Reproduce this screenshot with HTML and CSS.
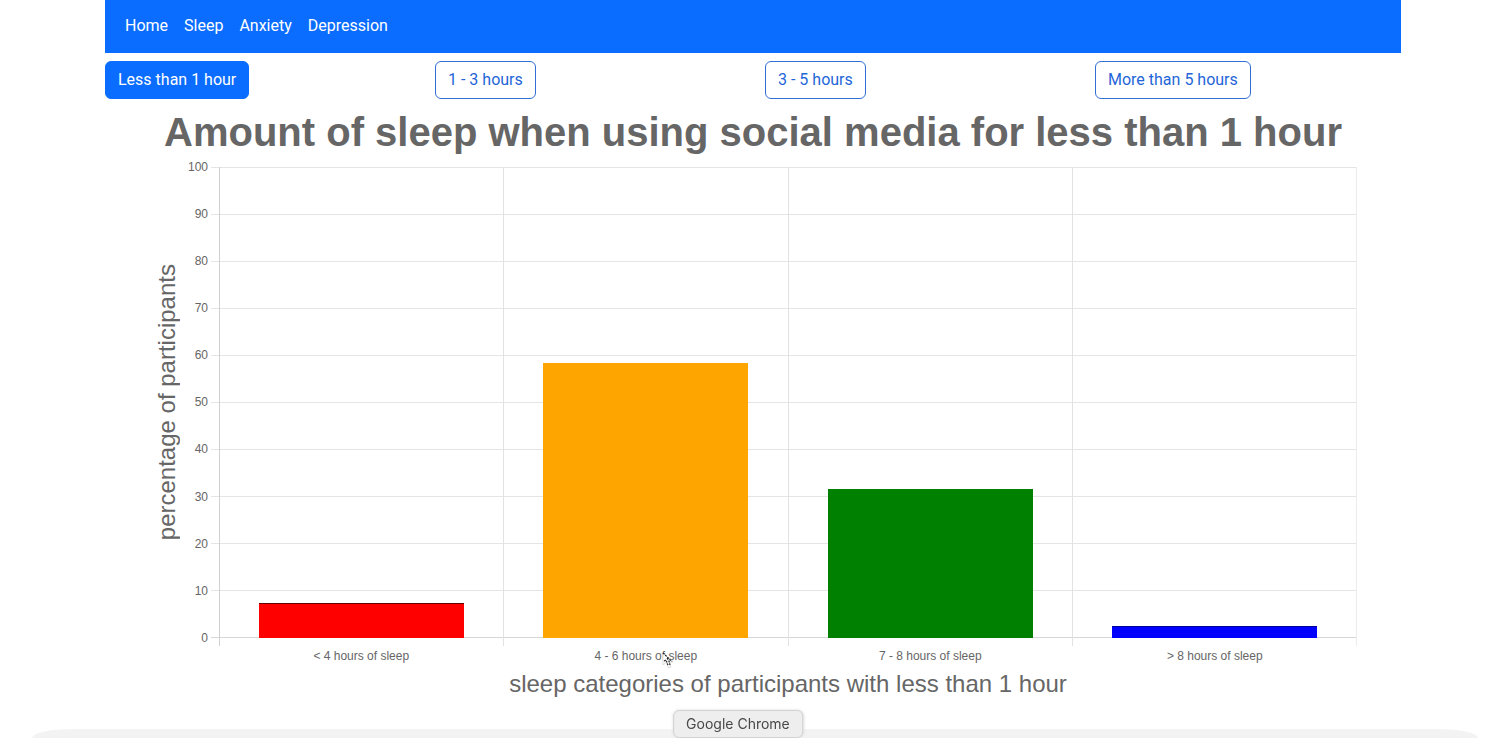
FILE: index.html
```html
<!DOCTYPE html>
<html lang="en">
<head>
<meta charset="utf-8">
<meta name="viewport" content="width=device-width, initial-scale=1">
<title>Sleep and social media</title>
<link rel="stylesheet" href="styles.css">
</head>
<body>
<div class="container">
  <nav class="navbar">
    <a href="#home">Home</a>
    <a href="#sleep">Sleep</a>
    <a href="#anxiety">Anxiety</a>
    <a href="#depression">Depression</a>
  </nav>
  <div class="filters">
    <div><button type="button" class="btn btn-active" aria-pressed="true">Less than 1 hour</button></div>
    <div><button type="button" class="btn">1 - 3 hours</button></div>
    <div><button type="button" class="btn">3 - 5 hours</button></div>
    <div><button type="button" class="btn">More than 5 hours</button></div>
  </div>
  <main class="chart">
    <h1 class="chart-title">Amount of sleep when using social media for less than 1 hour</h1>
    <div class="chart-body">
      <div class="y-title"><span>percentage of participants</span></div>
      <div class="y-ticks">
        <span>100</span><span>90</span><span>80</span><span>70</span><span>60</span><span>50</span><span>40</span><span>30</span><span>20</span><span>10</span><span>0</span>
      </div>
      <div class="plot">
        <div class="rows"><i></i><i></i><i></i><i></i><i></i><i></i><i></i><i></i><i></i><i></i></div>
        <div class="cols"><i></i><i></i><i></i><i></i></div>
        <div class="bars">
          <div class="bar red" style="height:7.5%"></div>
          <div class="bar orange" style="height:58.3%"></div>
          <div class="bar green" style="height:31.7%"></div>
          <div class="bar blue" style="height:2.5%"></div>
        </div>
      </div>
      <div class="x-ticks">
        <span>&lt; 4 hours of sleep</span><span>4 - 6 hours of sleep</span><span>7 - 8 hours of sleep</span><span>&gt; 8 hours of sleep</span>
      </div>
      <div class="x-title">sleep categories of participants with less than 1 hour</div>
    </div>
  </main>
</div>
<div class="dock"></div>
<div class="dock-tip">Google Chrome</div>
<svg class="cursor" width="12" height="18" viewBox="0 0 12 18" aria-hidden="true">
  <path d="M1 1V13L4 10.500L6.500 16L9 15L7 10H11Z" fill="#fff" stroke="#ddd" stroke-width="1"/>
  <path d="M1 1L10 9.500M2 9L4 8L6 13M5 6L7 9L8 13" fill="none" stroke="#222" stroke-width="1.200" stroke-dasharray="2 1"/>
</svg>
</body>
</html>
```
FILE: styles.css
```css
* { box-sizing: border-box; }

body {
  margin: 0;
  background: #fff;
  font-family: Roboto, "Liberation Sans", sans-serif;
  font-size: 16px;
  line-height: 24px;
}

.container {
  max-width: 1320px;
  margin: 0 auto;
  padding: 0 12px;
}

.navbar {
  display: flex;
  gap: 16px;
  padding: 14px 20px 15px;
  background: #0a6dff;
}

.navbar a {
  color: #fff;
  text-decoration: none;
}

.filters {
  display: grid;
  grid-template-columns: repeat(4, 1fr);
  gap: 24px;
  padding-top: 8px;
}

.btn {
  display: block;
  padding: 6px 12px;
  border: 1px solid #2f6fd6;
  border-radius: 6px;
  background: #fff;
  color: #1f66d8;
  font: inherit;
  cursor: pointer;
}

.btn-active {
  border-color: #0a6dff;
  background: #0a6dff;
  color: #fff;
}

.chart {
  padding-top: 9px;
  color: #666;
  font-family: "Liberation Sans", Arial, sans-serif;
}

.chart-title {
  margin: 0;
  font-size: 40px;
  line-height: 48px;
  font-weight: 700;
  text-align: center;
  white-space: nowrap;
}

.chart-body {
  display: grid;
  grid-template-columns: 28px 27px 1fr;
  padding: 11px 44px 0 48px;
}

.y-title {
  display: flex;
  align-items: center;
  justify-content: center;
  font-size: 24px;
  line-height: 28px;
}

.y-title span {
  writing-mode: vertical-rl;
  transform: rotate(180deg);
  white-space: nowrap;
}

.y-ticks {
  display: flex;
  flex-direction: column;
  justify-content: space-between;
  align-items: flex-end;
  margin: -8px 0;
  font-size: 12px;
  line-height: 16px;
}

.plot {
  display: grid;
  margin-left: 11px;
  aspect-ratio: 29 / 12;
}

.rows, .cols, .bars {
  grid-area: 1 / 1;
}

.rows {
  display: grid;
  grid-template-rows: repeat(10, 1fr);
  margin-left: -8px;
  border-bottom: 1px solid #d6d6d6;
}

.rows i { border-top: 1px solid #e5e5e5; }

.cols {
  display: grid;
  grid-template-columns: repeat(4, 1fr);
  margin-bottom: -8px;
  border-right: 1px solid #ececec;
}

.cols i { border-left: 1px solid #e2e2e2; }

.cols i:first-child { border-color: #d0d0d0; }

.bars {
  display: grid;
  grid-template-columns: repeat(4, 1fr);
  align-items: end;
  justify-items: center;
}

.bar { width: 72%; }

.red { background: #f00; border-top: 1px solid #600; }
.orange { background: #ffa500; }
.green { background: #008000; }
.blue { background: #00f; border-top: 1px solid #00009a; }

.x-ticks {
  grid-column: 3;
  display: grid;
  grid-template-columns: repeat(4, 1fr);
  margin-left: 11px;
  padding-top: 10px;
  font-size: 12px;
  line-height: 16px;
  text-align: center;
}

.x-title {
  grid-column: 3;
  margin-left: 11px;
  padding-top: 4px;
  font-size: 24px;
  line-height: 32px;
  text-align: center;
}

.dock {
  position: fixed;
  right: 28px;
  bottom: 0;
  left: 32px;
  height: 9px;
  border-radius: 40px 40px 0 0 / 9px 9px 0 0;
  background: #f3f3f3;
}

.dock-tip {
  position: fixed;
  bottom: 0;
  left: 49%;
  padding: 1px 12px;
  border: 1px solid #d2d2d2;
  border-radius: 6px;
  background: #eee;
  box-shadow: 0 0 3px #ddd;
  color: #484848;
  font-family: Inter, sans-serif;
  font-size: 14px;
  line-height: 24px;
  transform: translateX(-50%);
}

.cursor {
  position: absolute;
  top: 652px;
  left: 662px;
}
```
